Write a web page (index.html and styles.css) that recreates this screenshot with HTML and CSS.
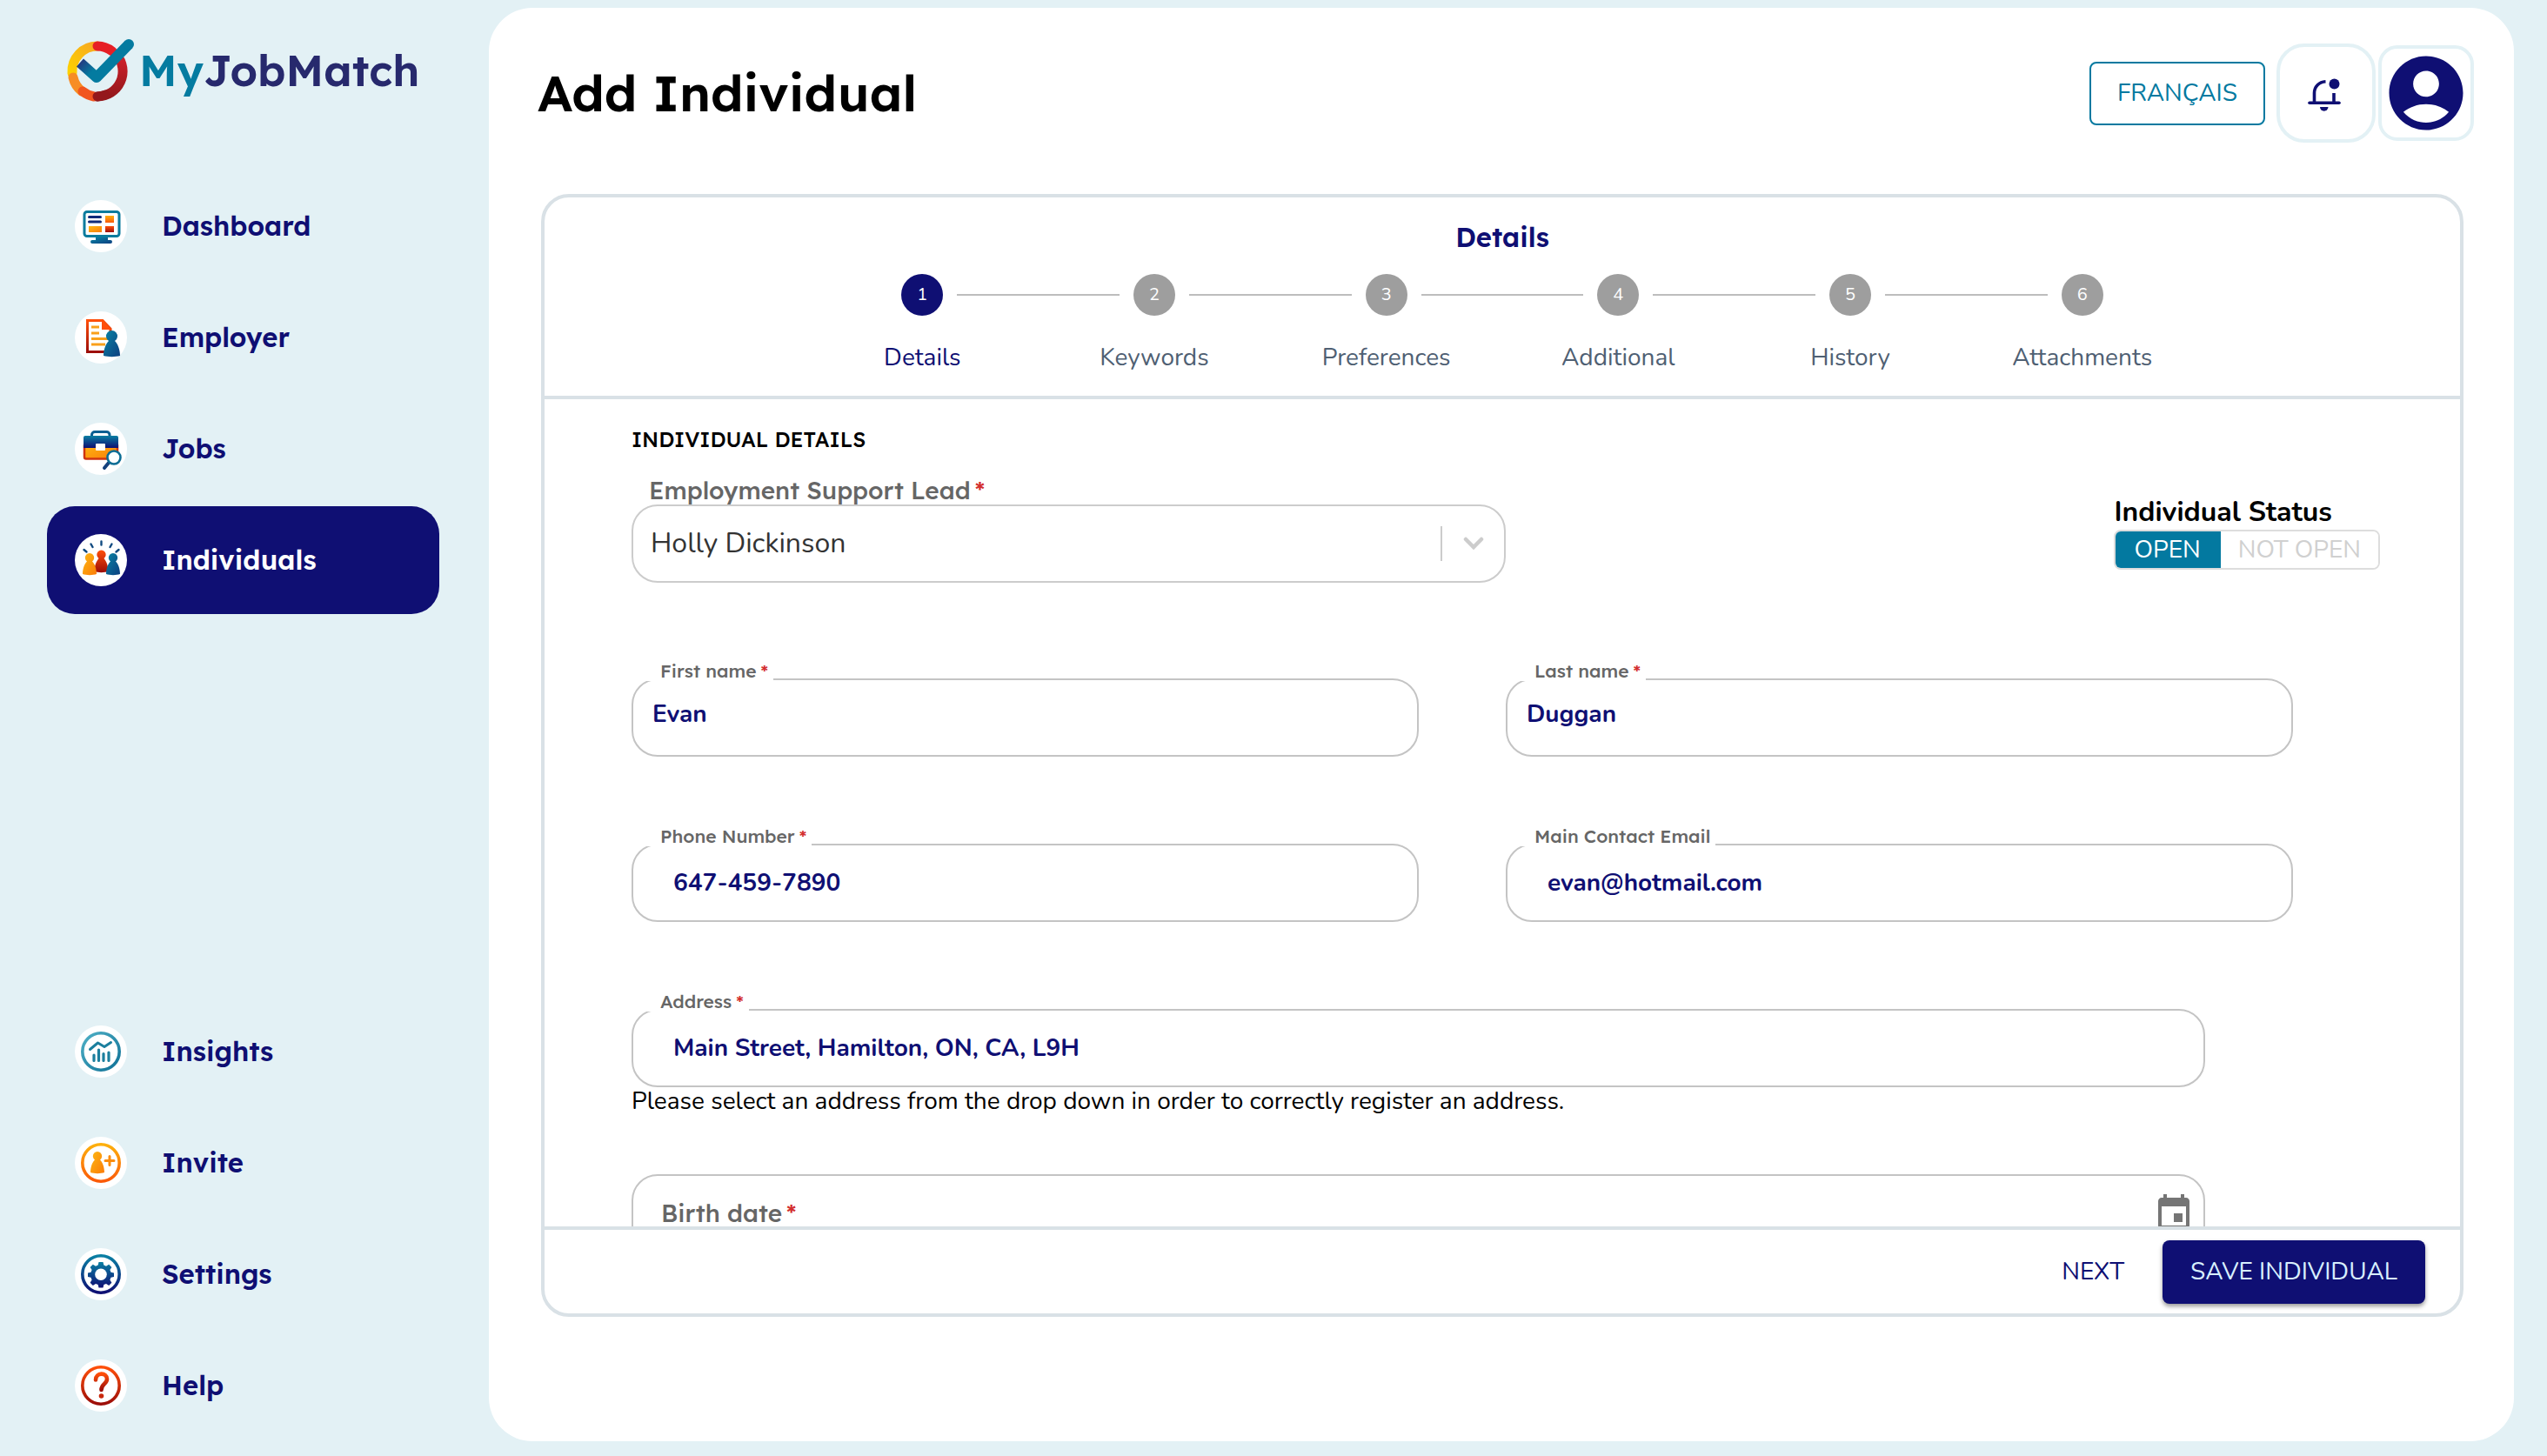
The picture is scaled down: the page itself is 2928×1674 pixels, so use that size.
FILE: index.html
```html
<!DOCTYPE html>
<html lang="en">
<head>
<meta charset="utf-8">
<title>MyJobMatch - Add Individual</title>
<link rel="stylesheet" href="styles.css">
</head>
<body>
<svg class="defs" aria-hidden="true">
  <defs>
    <linearGradient id="blue" x1="0" y1="0" x2="0" y2="1"><stop offset="0" stop-color="#0a7fa3"/><stop offset="1" stop-color="#0f0f73"/></linearGradient>
    <linearGradient id="teal" x1="0" y1="0" x2="1" y2="1"><stop offset="0" stop-color="#0a84a5"/><stop offset="1" stop-color="#0b3f80"/></linearGradient>
    <linearGradient id="aqua" x1="0" y1="0" x2="1" y2="1"><stop offset="0" stop-color="#4fb0c6"/><stop offset="1" stop-color="#0f7196"/></linearGradient>
    <linearGradient id="orange" x1="0" y1="0" x2="0" y2="1"><stop offset="0" stop-color="#fdb00d"/><stop offset="1" stop-color="#fb5a08"/></linearGradient>
    <linearGradient id="amber" x1="0" y1="0" x2="1" y2="1"><stop offset="0" stop-color="#fdb813"/><stop offset="1" stop-color="#fb7c08"/></linearGradient>
    <linearGradient id="red" x1="0" y1="0" x2="0" y2="1"><stop offset="0" stop-color="#ff4f0a"/><stop offset="1" stop-color="#9c0d08"/></linearGradient>
    <linearGradient id="ringRed" x1="0" y1="0" x2="0" y2="1"><stop offset="0" stop-color="#d3202a"/><stop offset="1" stop-color="#94181c"/></linearGradient>
    <linearGradient id="ringYellow" x1="0" y1="1" x2="1" y2="0"><stop offset="0" stop-color="#fdd000"/><stop offset="1" stop-color="#f7a823"/></linearGradient>
    <linearGradient id="check" gradientUnits="userSpaceOnUse" x1="14" y1="26" x2="28" y2="40"><stop offset="0" stop-color="#26307c"/><stop offset="1" stop-color="#047ba0"/></linearGradient>
  </defs>
</svg>
<div class="app">
  <aside class="sidebar">
    <a class="logo" href="#">
      <svg class="logo-mark" viewBox="0 0 80 74" aria-hidden="true">
        <g fill="none" stroke-width="11" stroke-linecap="round">
          <path d="M58 19A29 29 0 0 1 36 67" stroke="url(#ringRed)"/>
          <path d="M7 40A29 29 0 0 1 36 9" stroke="url(#ringYellow)"/>
          <path d="M36 9A29 29 0 0 1 53 15" stroke="#e61e25"/>
          <path d="M18 61A29 29 0 0 1 8 45" stroke="#f78d25"/>
          <path d="M32 67A29 29 0 0 1 19 61" stroke="#f1551f"/>
          <path d="M45 65A29 29 0 0 1 36 67" stroke="#94181c"/>
        </g>
        <path d="M16 28L35 45L72 7" fill="none" stroke="url(#check)" stroke-width="12" stroke-linejoin="round"/>
        <circle cx="72" cy="7" r="6" fill="#047ba0"/>
      </svg>
      <span class="logo-text"><span class="logo-my">My</span>JobMatch</span>
    </a>
    <nav class="nav">
      <a class="nav-item" href="#">
        <svg class="nav-icon" viewBox="0 0 60 60" aria-hidden="true"><circle cx="30" cy="30" r="30" fill="#fff"/><rect x="11" y="13.500" width="40" height="28" rx="3" fill="#fff" stroke="#0b7b9d" stroke-width="3"/><rect x="15" y="18" width="16" height="3" rx="1.500" fill="#102a78"/><rect x="15" y="23.500" width="16" height="3" rx="1.500" fill="#102a78"/><rect x="35" y="18" width="10" height="8" fill="url(#orange)"/><rect x="16" y="30" width="15" height="7" fill="url(#amber)"/><rect x="35" y="30" width="10" height="7" fill="url(#red)"/><path d="M24 43h14v3h3a2 2 0 0 1 0 4H20a2 2 0 0 1 0-4h4z" fill="url(#teal)"/></svg>
        Dashboard</a>
      <a class="nav-item" href="#">
        <svg class="nav-icon" viewBox="0 0 60 60" aria-hidden="true"><circle cx="30" cy="30" r="30" fill="#fff"/><path d="M14.500 10.500H32L41 20V46.500H14.500Z" fill="#fff" stroke="url(#red)" stroke-width="3"/><path d="M31 9.500L42.500 21H31Z" fill="#ff4f0a"/><path d="M19 18h9M19 25h9M19 31.500h19M19 38h16" stroke="#f9a01b" stroke-width="3"/><path d="M33 51c0-8 3-14 6-17a6.500 6.500 0 1 1 7 0c3 3 6 9 6 17-5 1.500-14 1.500-19 0z" fill="url(#teal)"/></svg>
        Employer</a>
      <a class="nav-item" href="#">
        <svg class="nav-icon" viewBox="0 0 60 60" aria-hidden="true"><circle cx="30" cy="30" r="30" fill="#fff"/><path d="M19.500 16v-2a3.500 3.500 0 0 1 3.500-3.500h13.500a3.500 3.500 0 0 1 3.500 3.500v2" fill="none" stroke="#0c5f91" stroke-width="3"/><rect x="11" y="24" width="38" height="17.500" rx="2" fill="url(#amber)" stroke="#cf3410" stroke-width="2.500"/><path d="M12 15h36a2 2 0 0 1 2 2v12H10V17a2 2 0 0 1 2-2z" fill="url(#blue)"/><rect x="24" y="24" width="11" height="8" rx="1" fill="#fff"/><path d="M39 46l-5 6" stroke="#14407c" stroke-width="4" stroke-linecap="round"/><circle cx="45" cy="40" r="7.500" fill="#fff" stroke="#0c6d95" stroke-width="2.600"/></svg>
        Jobs</a>
      <a class="nav-item nav-item-active" href="#" aria-current="page">
        <svg class="nav-icon" viewBox="0 0 60 60" aria-hidden="true"><circle cx="30" cy="30" r="30" fill="#fff"/><path d="M30.500 8.500v4M18.500 11.500l2 3.500M42.500 11.500l-2 3.500M10.500 18l3 2.500M50.500 18l-3 2.500" stroke="#104a80" stroke-width="2.400" stroke-linecap="round"/><path d="M22.500 43c0-7 2.500-12 5-15a5.200 5.200 0 1 1 6 0c2.500 3 5 8 5 15-4 1.500-12 1.500-16 0z" fill="url(#red)"/><path d="M9 46c0-7 2.500-12 5-14.500a5.200 5.200 0 1 1 6 0c2.500 2.500 5 7.500 5 14.500-4 1.500-12 1.500-16 0z" fill="url(#amber)"/><path d="M36 46c0-7 2.500-12 5-14.500a5.200 5.200 0 1 1 6 0c2.500 2.500 5 7.500 5 14.500-4 1.500-12 1.500-16 0z" fill="url(#teal)"/></svg>
        Individuals</a>
    </nav>
    <nav class="nav nav-bottom">
      <a class="nav-item" href="#">
        <svg class="nav-icon" viewBox="0 0 60 60" aria-hidden="true"><circle cx="30" cy="30" r="30" fill="#fff"/><circle cx="30" cy="30" r="21.200" fill="none" stroke="url(#aqua)" stroke-width="3.600"/><path d="M17.500 27.500l9-7.500 7.500 4.500 7.500-5" fill="none" stroke="#1b7f9e" stroke-width="3" stroke-linecap="round" stroke-linejoin="round"/><path d="M22 34v6.500M27.500 28v12.500M33 32.500v8M39 31v9.500" stroke="#1b7f9e" stroke-width="3.200" stroke-linecap="round"/></svg>
        Insights</a>
      <a class="nav-item" href="#">
        <svg class="nav-icon" viewBox="0 0 60 60" aria-hidden="true"><circle cx="30" cy="30" r="30" fill="#fff"/><circle cx="30" cy="30" r="21.200" fill="none" stroke="url(#orange)" stroke-width="3.600"/><path d="M18 41c0-7 2.500-12 5-14.500a5.200 5.200 0 1 1 6 0c2.500 2.500 5 7.500 5 14.500-4 1.500-12 1.500-16 0z" fill="url(#amber)"/><path d="M40 22.500v10M35 27.500h10" stroke="#fb8c0c" stroke-width="3" stroke-linecap="round"/></svg>
        Invite</a>
      <a class="nav-item" href="#">
        <svg class="nav-icon" viewBox="0 0 60 60" aria-hidden="true"><circle cx="30" cy="30" r="30" fill="#fff"/><circle cx="30" cy="30" r="21.200" fill="none" stroke="url(#blue)" stroke-width="3.600"/><path d="M27.500 16h5l.8 3.600 2.700 1.100 3.200-2 3.200 3.200-2 3.200 1.100 2.700 3.500.7v4.500l-3.500.8-1.100 2.700 2 3.200-3.200 3.200-3.200-2-2.700 1.100-.8 3.500h-5l-.8-3.500-2.700-1.100-3.200 2-3.200-3.200 2-3.200-1.100-2.700-3.500-.8v-4.500l3.500-.7 1.100-2.700-2-3.200 3.200-3.200 3.200 2 2.700-1.100z" fill="url(#blue)"/><circle cx="30" cy="30.300" r="6.800" fill="#fff"/></svg>
        Settings</a>
      <a class="nav-item" href="#">
        <svg class="nav-icon" viewBox="0 0 60 60" aria-hidden="true"><circle cx="30" cy="30" r="30" fill="#fff"/><circle cx="30" cy="30" r="21.200" fill="none" stroke="url(#red)" stroke-width="3.600"/><path d="M24 23.500C24 14.500 37 14.500 37 22.500 37 28.500 30.500 27.500 30.500 35" fill="none" stroke="url(#red)" stroke-width="4.600" stroke-linecap="round"/><circle cx="30.500" cy="42" r="2.800" fill="#c9280c"/></svg>
        Help</a>
    </nav>
  </aside>

  <main class="main">
    <header class="header">
      <h1 class="title">Add Individual</h1>
      <button class="btn btn-outline" type="button">FRANÇAIS</button>
      <button class="icon-btn icon-btn-bell" type="button" aria-label="Notifications">
        <svg class="bell" viewBox="0 -5 44 44" aria-hidden="true"><g fill="none" stroke="#0f0f73" stroke-width="3.600"><path d="M21.500 3.700C14 4.200 8.500 9.500 8.500 17v11M31 17v11"/><path d="M3 28.300h34" stroke-linecap="round"/></g><path d="M15 33h9.500a4.700 4.700 0 0 1-9.500 0z" fill="#0f0f73"/><circle cx="31.500" cy="6.500" r="6" fill="#0f0f73"/></svg>
      </button>
      <button class="icon-btn icon-btn-account" type="button" aria-label="Account">
        <svg class="avatar" viewBox="0 0 24 24" aria-hidden="true"><path fill="#0f0f73" d="M12 2C6.480 2 2 6.480 2 12s4.480 10 10 10 10-4.480 10-10S17.520 2 12 2zm0 4c1.930 0 3.500 1.570 3.500 3.500S13.930 13 12 13s-3.500-1.570-3.500-3.500S10.070 6 12 6zm0 14c-2.030 0-4.430-.82-6.140-2.880C7.550 15.800 9.680 15 12 15s4.450.8 6.140 2.120C16.430 19.180 14.030 20 12 20z"/></svg>
      </button>
    </header>

    <section class="card">
      <div class="card-head">
        <h2 class="card-title">Details</h2>
        <ol class="steps">
          <li class="step step-active"><span class="step-dot">1</span><span class="step-label">Details</span></li>
          <li class="step"><span class="step-dot">2</span><span class="step-label">Keywords</span></li>
          <li class="step"><span class="step-dot">3</span><span class="step-label">Preferences</span></li>
          <li class="step"><span class="step-dot">4</span><span class="step-label">Additional</span></li>
          <li class="step"><span class="step-dot">5</span><span class="step-label">History</span></li>
          <li class="step"><span class="step-dot">6</span><span class="step-label">Attachments</span></li>
        </ol>
      </div>

      <form class="form" id="individual">
        <h3 class="form-title">INDIVIDUAL DETAILS</h3>
        <div class="lead-row">
          <div class="lead">
            <label class="lead-label" for="lead">Employment Support Lead<span class="req">*</span></label>
            <div class="select-box">
              <select class="select" id="lead"><option>Holly Dickinson</option></select>
              <svg class="chevron" viewBox="0 0 24 16" aria-hidden="true"><path d="M3 3l9 9 9-9" fill="none" stroke="#ccc" stroke-width="4.500" stroke-linecap="round"/></svg>
            </div>
          </div>
          <div class="status">
            <span class="status-label" id="status-label">Individual Status</span>
            <div class="toggle" role="group" aria-labelledby="status-label">
              <button class="toggle-btn toggle-on" type="button" aria-pressed="true">OPEN</button>
              <button class="toggle-btn" type="button" aria-pressed="false">NOT OPEN</button>
            </div>
          </div>
        </div>

        <div class="row row-first">
          <div class="field">
            <label class="label" for="first">First name<span class="req">*</span></label>
            <input class="input input-name" id="first" type="text" value="Evan">
          </div>
          <div class="field">
            <label class="label" for="last">Last name<span class="req">*</span></label>
            <input class="input input-name" id="last" type="text" value="Duggan">
          </div>
        </div>
        <div class="row">
          <div class="field">
            <label class="label" for="phone">Phone Number<span class="req">*</span></label>
            <input class="input" id="phone" type="tel" value="647-459-7890">
          </div>
          <div class="field">
            <label class="label" for="email">Main Contact Email</label>
            <input class="input" id="email" type="email" value="evan@hotmail.com">
          </div>
        </div>
        <div class="row row-wide">
          <div class="field">
            <label class="label" for="address">Address<span class="req">*</span></label>
            <input class="input" id="address" type="text" value="Main Street, Hamilton, ON, CA, L9H">
          </div>
        </div>
        <p class="hint">Please select an address from the drop down in order to correctly register an address.</p>
        <div class="row row-wide row-date">
          <div class="date-box">
            <label class="date-label" for="birth">Birth date<span class="req">*</span></label>
            <input class="date-input" id="birth" type="text">
            <svg class="calendar" viewBox="0 0 24 24" aria-hidden="true"><path fill="#757575" d="M17 12h-5v5h5v-5zM16 1v2H8V1H6v2H5c-1.110 0-1.990.9-1.990 2L3 19c0 1.100.89 2 2 2h14c1.100 0 2-.9 2-2V5c0-1.100-.9-2-2-2h-1V1h-2zm3 18H5V8h14v11z"/></svg>
          </div>
        </div>
      </form>

      <footer class="card-foot">
        <button class="btn btn-text" type="button">NEXT</button>
        <button class="btn btn-primary" type="submit" form="individual">SAVE INDIVIDUAL</button>
      </footer>
    </section>
  </main>
</div>
</body>
</html>
```
FILE: styles.css
```css
:root {
  --navy: #0f0f73;
  --teal: #0379a0;
  --mist: #e3f1f5;
  --line: #d9e1e6;
  --field: #c4c4c4;
  --heading: Lexend, Inter, sans-serif;
  --body: Nunito, Lato, sans-serif;
}

* { box-sizing: border-box; }

body {
  margin: 0;
  background: var(--mist);
  font-family: var(--body);
  font-size: 28px;
  line-height: 32px;
  color: #000;
}

h1, h2, h3, p, ol { margin: 0; padding: 0; }
button, input, select { font: inherit; margin: 0; }
button { cursor: pointer; }

.defs { position: absolute; width: 0; height: 0; }

.app { display: flex; height: 100vh; }

/* Sidebar */
.sidebar {
  display: flex;
  flex-direction: column;
  flex: none;
  width: 562px;
  padding: 44px 57px 19px 54px;
}

.logo {
  display: flex;
  align-items: center;
  gap: 4px;
  padding-left: 22px;
  margin-bottom: 80px;
  text-decoration: none;
  color: #27296d;
}
.logo-mark { width: 80px; height: 74px; }
.logo-text { font: 600 50px/74px var(--heading); }
.logo-my { color: #047ba0; }

.nav { display: flex; flex-direction: column; gap: 4px; }
.nav-bottom { margin-top: auto; }
.nav-item {
  display: flex;
  align-items: center;
  gap: 40px;
  height: 124px;
  padding-left: 32px;
  border-radius: 32px;
  font: 600 31px/40px var(--heading);
  color: var(--navy);
  text-decoration: none;
}
.nav-item-active { background: var(--navy); color: #fff; }
.nav-icon { width: 60px; height: 60px; }

/* Main panel */
.main {
  display: flex;
  flex-direction: column;
  flex: 1;
  min-width: 0;
  margin: 9px 38px 17px 0;
  background: #fff;
  border-radius: 50px;
}

.header {
  display: flex;
  align-items: center;
  height: 196px;
  flex: none;
  padding: 0 46px 0 56px;
}
.title { flex: 1; font: 600 58px/72px var(--heading); }

.btn {
  height: 73px;
  border: 0;
  border-radius: 8px;
  background: none;
  color: var(--navy);
}
.btn-outline {
  padding: 0 30px;
  margin-right: 13px;
  border: 2px solid var(--teal);
  color: var(--teal);
}
.btn-text { padding: 0 28px; }
.btn-primary {
  padding: 0 32px;
  background: var(--navy);
  color: #d8efff;
  box-shadow: 0 3px 5px rgba(0, 0, 0, .4);
}

.icon-btn {
  display: grid;
  place-items: center;
  padding: 0;
  border: 4px solid var(--mist);
  background: #fff;
}
.icon-btn-bell { width: 114px; height: 114px; margin-right: 3px; border-radius: 32px; }
.icon-btn-account { width: 110px; height: 110px; border-radius: 22px; }
.bell { width: 44px; height: 44px; }
.avatar { width: 102px; height: 102px; }

/* Card */
.card {
  display: flex;
  flex-direction: column;
  flex: 1;
  min-height: 0;
  margin: 18px 58px 143px 60px;
  border: 4px solid var(--line);
  border-radius: 32px;
}
.card-head {
  flex: none;
  padding: 26px 0;
  border-bottom: 4px solid var(--line);
}
.card-title {
  font: 600 31px/40px var(--heading);
  text-align: center;
  color: var(--navy);
}

.steps {
  display: grid;
  grid-template-columns: repeat(6, 1fr);
  max-width: 1600px;
  margin: 22px auto 0;
  list-style: none;
}
.step {
  display: grid;
  grid-template-columns: 1fr 48px 1fr;
  column-gap: 16px;
  row-gap: 30px;
  align-items: center;
  color: #4f6073;
}
.step::before, .step::after { content: ""; height: 2px; background: #bdbdbd; }
.step:first-child::before, .step:last-child::after { background: none; }
.step::before { grid-area: 1 / 1; }
.step::after { grid-area: 1 / 3; }
.step-dot {
  grid-area: 1 / 2;
  width: 48px;
  height: 48px;
  border-radius: 50%;
  background: #9e9e9e;
  color: #fff;
  font-size: 20px;
  line-height: 48px;
  text-align: center;
}
.step-label { grid-area: 2 / 1 / 3 / 4; text-align: center; line-height: 36px; }
.step-active { color: var(--navy); }
.step-active .step-dot { background: var(--navy); }

/* Form */
.form {
  flex: 1;
  min-height: 0;
  padding: 30px 92px 30px 100px;
  overflow-y: auto;
  scrollbar-width: none;
}
.form-title { font: 500 24px/32px var(--heading); }

.lead-row {
  display: grid;
  grid-template-columns: 1fr 1fr;
  align-items: end;
  margin-top: 27px;
}
.lead-label {
  display: block;
  padding-left: 20px;
  font: 500 28px/32px var(--heading);
  color: #666;
}
.req { margin-left: 5px; color: #d32f2f; }

.select-box {
  display: flex;
  align-items: center;
  height: 90px;
  padding-right: 23px;
  border: 2px solid #ccc;
  border-radius: 30px;
}
.select {
  flex: 1;
  height: 40px;
  padding: 0 20px;
  border: 0;
  border-right: 2px solid #ccc;
  appearance: none;
  background: none;
  font-size: 32px;
  line-height: 40px;
  color: #333;
}
.chevron { width: 24px; height: 16px; margin-left: 24px; }

.status { justify-self: end; padding-bottom: 15px; }
.status-label { display: block; font-size: 32px; font-weight: 700; line-height: 40px; }
.toggle {
  display: flex;
  height: 46px;
  border: 2px solid #ddd;
  border-radius: 8px;
  overflow: hidden;
}
.toggle-btn {
  padding: 0 20px;
  border: 0;
  background: #fff;
  line-height: 42px;
  color: #d0d0d0;
}
.toggle-on {
  margin: -2px 0 -2px -2px;
  padding: 0 23px;
  background: var(--teal);
  color: #fff;
}

.row { display: grid; grid-template-columns: 1fr 1fr; margin-top: 79px; }
.row-first { margin-top: 89px; }
.row-wide { grid-template-columns: 1fr; }
.row-date { margin-top: 68px; }

.field {
  display: flex;
  flex-direction: column;
  align-items: flex-start;
  width: 90%;
}
.label {
  z-index: 1;
  margin: 0 0 -3px 17px;
  padding: 0 6px 0 16px;
  background: #fff;
  font: 500 21px/24px var(--heading);
  color: #666;
}
.input {
  width: 100%;
  height: 90px;
  padding: 0 46px;
  border: 2px solid var(--field);
  border-radius: 30px;
  background: #fff;
  font-weight: 700;
  color: var(--navy);
}
.input-name { padding: 0 22px 8px; }

.hint { line-height: 32px; }

.date-box {
  display: flex;
  align-items: center;
  width: 90%;
  height: 90px;
  padding: 0 10px 0 32px;
  border: 2px solid var(--field);
  border-radius: 30px;
}
.date-label { font: 500 28px/32px var(--heading); color: #666; }
.date-input { flex: 1; min-width: 0; height: 60px; border: 0; background: none; }
.calendar { width: 48px; height: 48px; }

.card-foot {
  display: flex;
  align-items: center;
  justify-content: flex-end;
  flex: none;
  gap: 16px;
  height: 100px;
  padding-right: 40px;
  border-top: 4px solid var(--line);
}
```
